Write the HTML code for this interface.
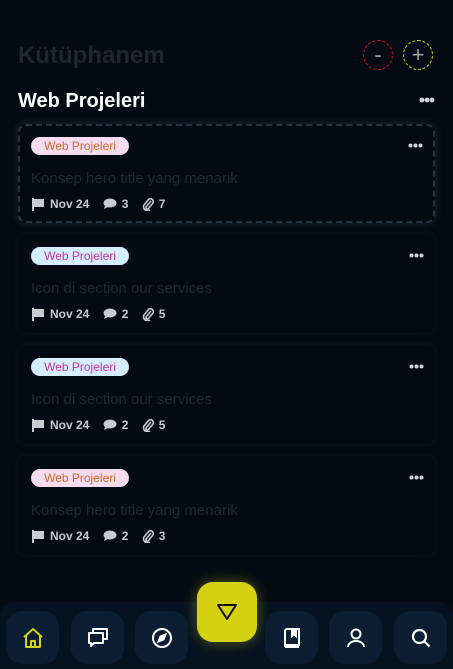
<!DOCTYPE html>
<html><head><meta charset="utf-8"><style>
*{margin:0;padding:0;box-sizing:border-box}
body{width:453px;height:669px;background:#040a13;font-family:"Liberation Sans",sans-serif;position:relative;overflow:hidden}
.h1{position:absolute;left:18px;top:42px;font-size:24px;font-weight:bold;color:#1e2630}
.circ{position:absolute;top:40px;width:30px;height:30px;border-radius:50%;color:#9aa0a6;font-size:22px;text-align:center;line-height:28px}
.h2{position:absolute;left:18px;top:90px;font-size:20px;font-weight:bold;color:#fff}
.dots{position:absolute}
.card{position:absolute;left:18px;width:417px;height:99px;border-radius:8px;background:#030a13;box-shadow:0 0 6px rgba(20,30,45,.6)}
.card.d{border:2.5px dashed #2a3440;box-shadow:0 0 8px rgba(40,55,75,.7)}
.tag{position:absolute;left:13px;top:13px;width:98px;height:18px;border-radius:9px;font-size:12px;text-align:center;line-height:18px}
.t{position:absolute;left:13px;top:46px;font-size:15px;color:#1f2a36}
.meta{position:absolute;left:13px;top:73px;font-size:12px;font-weight:bold;color:#c8ccd2;display:flex;align-items:center;gap:0}
.meta svg{margin-right:5px}
.nav{position:absolute;left:0;top:602px;width:453px;height:67px;background:#06121f;border-radius:14px 14px 0 0}
.b{position:absolute;top:611px;width:53px;height:53px;border-radius:16px;background:#0b1e33;display:flex;align-items:center;justify-content:center}
.c{position:absolute;left:197px;top:582px;width:60px;height:60px;border-radius:16px;background:#d4d012;box-shadow:0 0 14px rgba(212,208,18,.4);display:flex;align-items:center;justify-content:center}
</style></head><body>
<div class="h1">Kütüphanem</div>
<div class="circ" style="left:363px;border:1px dashed #d01010">-</div>
<div class="circ" style="left:403px;border:1px dashed #d8d010">+</div>
<div class="h2">Web Projeleri</div>
<svg class="dots" style="left:419px;top:97px" width="16" height="6" viewBox="0 0 16 6"><circle cx="3" cy="3" r="2.4" fill="#d0d4da"/><circle cx="8" cy="3" r="2.4" fill="#d0d4da"/><circle cx="13" cy="3" r="2.4" fill="#d0d4da"/></svg>

<div class="card d" style="top:124px">
<div class="tag" style="background:#f6dcf0;color:#d0682a;left:11px;top:11px">Web Projeleri</div>
<svg class="dots" style="right:10px;top:17px" width="15" height="5" viewBox="0 0 15 5"><circle cx="2.5" cy="2.5" r="2" fill="#d0d4da"/><circle cx="7.5" cy="2.5" r="2" fill="#d0d4da"/><circle cx="12.5" cy="2.5" r="2" fill="#d0d4da"/></svg>
<div class="t" style="left:11px;top:44px">Konsep hero title yang menarik</div>
<div class="meta" style="left:11px;top:71px">
<svg width="14" height="14" viewBox="0 0 14 14"><path d="M1 1h2v13H1zM3 2h10v8H3z" fill="#c8ccd2"/></svg>Nov 24&nbsp;&nbsp;&nbsp;&nbsp;
<svg width="14" height="12" viewBox="0 0 14 12"><ellipse cx="7" cy="5" rx="6.5" ry="4.5" fill="#c8ccd2"/><path d="M2 8l-1 3 4-2z" fill="#c8ccd2"/></svg>3&nbsp;&nbsp;&nbsp;&nbsp;
<svg width="12" height="13" viewBox="0 0 12 13"><path d="M9 3L4 9a1.5 1.5 0 002 2l5-6a3 3 0 00-4-4L2 7a4 4 0 006 5" stroke="#c8ccd2" stroke-width="1.6" fill="none"/></svg>7</div>
</div>

<div class="card" style="top:234px">
<div class="tag" style="background:#d3eeff;color:#d0309a">Web Projeleri</div>
<svg class="dots" style="right:11px;top:19px" width="15" height="5" viewBox="0 0 15 5"><circle cx="2.5" cy="2.5" r="2" fill="#d0d4da"/><circle cx="7.5" cy="2.5" r="2" fill="#d0d4da"/><circle cx="12.5" cy="2.5" r="2" fill="#d0d4da"/></svg>
<div class="t">Icon di section our services</div>
<div class="meta"><svg width="14" height="14" viewBox="0 0 14 14"><path d="M1 1h2v13H1zM3 2h10v8H3z" fill="#c8ccd2"/></svg>Nov 24&nbsp;&nbsp;&nbsp;&nbsp;<svg width="14" height="12" viewBox="0 0 14 12"><ellipse cx="7" cy="5" rx="6.5" ry="4.5" fill="#c8ccd2"/><path d="M2 8l-1 3 4-2z" fill="#c8ccd2"/></svg>2&nbsp;&nbsp;&nbsp;&nbsp;<svg width="12" height="13" viewBox="0 0 12 13"><path d="M9 3L4 9a1.5 1.5 0 002 2l5-6a3 3 0 00-4-4L2 7a4 4 0 006 5" stroke="#c8ccd2" stroke-width="1.6" fill="none"/></svg>5</div>
</div>

<div class="card" style="top:345px">
<div class="tag" style="background:#d3eeff;color:#d0309a">Web Projeleri</div>
<svg class="dots" style="right:11px;top:19px" width="15" height="5" viewBox="0 0 15 5"><circle cx="2.5" cy="2.5" r="2" fill="#d0d4da"/><circle cx="7.5" cy="2.5" r="2" fill="#d0d4da"/><circle cx="12.5" cy="2.5" r="2" fill="#d0d4da"/></svg>
<div class="t">Icon di section our services</div>
<div class="meta"><svg width="14" height="14" viewBox="0 0 14 14"><path d="M1 1h2v13H1zM3 2h10v8H3z" fill="#c8ccd2"/></svg>Nov 24&nbsp;&nbsp;&nbsp;&nbsp;<svg width="14" height="12" viewBox="0 0 14 12"><ellipse cx="7" cy="5" rx="6.5" ry="4.5" fill="#c8ccd2"/><path d="M2 8l-1 3 4-2z" fill="#c8ccd2"/></svg>2&nbsp;&nbsp;&nbsp;&nbsp;<svg width="12" height="13" viewBox="0 0 12 13"><path d="M9 3L4 9a1.5 1.5 0 002 2l5-6a3 3 0 00-4-4L2 7a4 4 0 006 5" stroke="#c8ccd2" stroke-width="1.6" fill="none"/></svg>5</div>
</div>

<div class="card" style="top:456px">
<div class="tag" style="background:#f6dcf0;color:#d0682a">Web Projeleri</div>
<svg class="dots" style="right:11px;top:19px" width="15" height="5" viewBox="0 0 15 5"><circle cx="2.5" cy="2.5" r="2" fill="#d0d4da"/><circle cx="7.5" cy="2.5" r="2" fill="#d0d4da"/><circle cx="12.5" cy="2.5" r="2" fill="#d0d4da"/></svg>
<div class="t">Konsep hero title yang menarik</div>
<div class="meta"><svg width="14" height="14" viewBox="0 0 14 14"><path d="M1 1h2v13H1zM3 2h10v8H3z" fill="#c8ccd2"/></svg>Nov 24&nbsp;&nbsp;&nbsp;&nbsp;<svg width="14" height="12" viewBox="0 0 14 12"><ellipse cx="7" cy="5" rx="6.5" ry="4.5" fill="#c8ccd2"/><path d="M2 8l-1 3 4-2z" fill="#c8ccd2"/></svg>2&nbsp;&nbsp;&nbsp;&nbsp;<svg width="12" height="13" viewBox="0 0 12 13"><path d="M9 3L4 9a1.5 1.5 0 002 2l5-6a3 3 0 00-4-4L2 7a4 4 0 006 5" stroke="#c8ccd2" stroke-width="1.6" fill="none"/></svg>3</div>
</div>

<div class="nav"></div>
<div class="b" style="left:6px"><svg width="22" height="22" viewBox="0 0 22 22" fill="none" stroke="#d4d012" stroke-width="2" stroke-linejoin="round"><path d="M2 10L11 2l9 8M4 8v12h14V8M9 20v-6h4v6"/></svg></div>
<div class="b" style="left:71px"><svg width="22" height="22" viewBox="0 0 22 22" fill="none" stroke="#fff" stroke-width="2" stroke-linejoin="round"><path d="M6 5V2h14v10h-3M2 6h14v10H7l-3 3v-3H2z"/></svg></div>
<div class="b" style="left:135px"><svg width="22" height="22" viewBox="0 0 22 22" fill="none" stroke="#fff" stroke-width="2"><circle cx="11" cy="11" r="9"/><path d="M14.5 7.5l-2 5-5 2 2-5z" fill="#fff"/></svg></div>
<div class="c"><svg width="22" height="18" viewBox="0 0 22 18"><path d="M2 2h18L11 16z" fill="none" stroke="#111" stroke-width="2" stroke-linejoin="round"/></svg></div>
<div class="b" style="left:265px"><svg width="22" height="22" viewBox="0 0 22 22" fill="none" stroke="#fff" stroke-width="2"><path d="M4 4a2 2 0 012-2h12v16H6a2 2 0 00-2 2zM4 20h14"/><path d="M11 2v7l2-2 2 2V2" fill="#fff"/></svg></div>
<div class="b" style="left:329px"><svg width="22" height="22" viewBox="0 0 22 22" fill="none" stroke="#fff" stroke-width="2"><circle cx="11" cy="7" r="4.5"/><path d="M3 20a8 6 0 0116 0"/></svg></div>
<div class="b" style="left:394px"><svg width="22" height="22" viewBox="0 0 22 22" fill="none" stroke="#fff" stroke-width="2.2"><circle cx="9.5" cy="9.5" r="6.5"/><path d="M14.5 14.5l5 5"/></svg></div>
</body></html>
